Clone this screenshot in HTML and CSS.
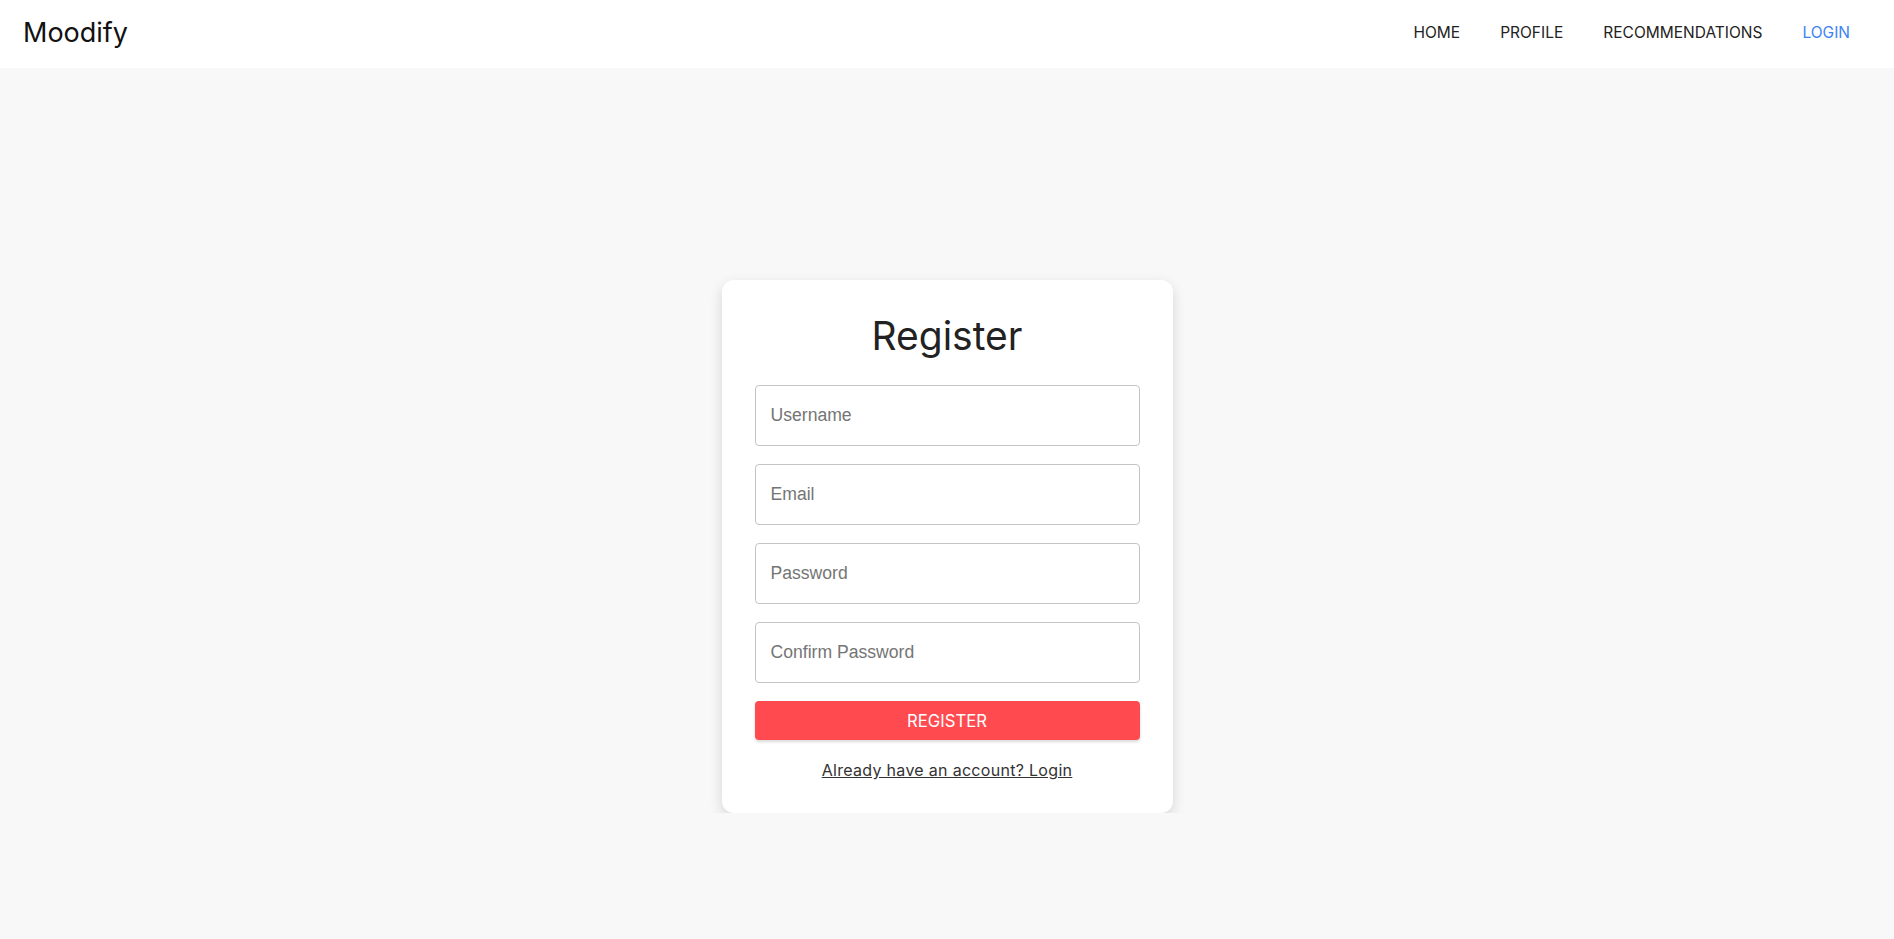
FILE: index.html
```html
<!DOCTYPE html>
<html lang="en">
<head>
    <meta charset="UTF-8">
    <meta name="viewport" content="width=device-width, initial-scale=1.0">
    <title>Register - Moodify</title>
    <link rel="stylesheet" href="styles.css">
</head>
<body>
    <header class="navbar">
        <a href="#" class="brand">Moodify</a>
        <nav class="nav-links">
            <a href="#">HOME</a>
            <a href="#">PROFILE</a>
            <a href="#">RECOMMENDATIONS</a>
            <a href="#" class="active">LOGIN</a>
        </nav>
    </header>

    <main class="page">
        <div class="register-container">
            <h2>Register</h2>
            <form id="registerForm">
                <input type="text" placeholder="Username" required>
                <input type="email" placeholder="Email" required>
                <input type="password" placeholder="Password" required>
                <input type="password" placeholder="Confirm Password" required>
                <button type="submit">REGISTER</button>
            </form>
            <a href="#" class="switch-link">Already have an account? Login</a>
        </div>
    </main>
</body>
</html>
```

FILE: styles.css
```css
body {
    margin: 0;
    font-family: Inter, "Open Sans", sans-serif;
    background-color: #f8f8f8;
    color: #222;
}
.navbar {
    height: 68px;
    box-sizing: border-box;
    background-color: #fff;
    display: flex;
    justify-content: space-between;
    align-items: center;
    padding: 0 44px 3px 23px;
}
.brand {
    font-size: 27px;
    color: #111;
    text-decoration: none;
}
.nav-links {
    display: flex;
    gap: 40px;
}
.nav-links a {
    font-size: 15.5px;
    color: #222;
    text-decoration: none;
}
.nav-links a.active {
    color: #3b82f6;
}
.page {
    display: flex;
    justify-content: center;
    padding-top: 212px;
}
.register-container {
    width: 451px;
    box-sizing: border-box;
    background-color: #fff;
    padding: 32px 33px 33px;
    border-radius: 12px;
    box-shadow: 0 5px 14px rgba(0, 0, 0, 0.14);
    text-align: center;
}
.register-container h2 {
    font-size: 39px;
    font-weight: 400;
    line-height: 48px;
    margin: 0 0 25px;
    color: #222;
}
#registerForm input {
    display: block;
    width: 100%;
    height: 61px;
    box-sizing: border-box;
    padding: 0 15px;
    margin-bottom: 18px;
    border: 1px solid #c4c4c4;
    border-radius: 4px;
    font-family: "Liberation Sans", Arial, sans-serif;
    font-size: 17.6px;
    color: #333;
}
#registerForm input::placeholder {
    color: #757575;
}
#registerForm button {
    display: block;
    width: 100%;
    height: 39px;
    border: none;
    border-radius: 4px;
    background-color: #ff4b4f;
    color: #fff;
    font-family: inherit;
    font-size: 16.7px;
    box-shadow: 0 2px 3px rgba(0, 0, 0, 0.15);
    cursor: pointer;
}
.switch-link {
    display: inline-block;
    margin-top: 20px;
    font-size: 16px;
    letter-spacing: 0.3px;
    color: #333;
    text-decoration: underline;
}
```
